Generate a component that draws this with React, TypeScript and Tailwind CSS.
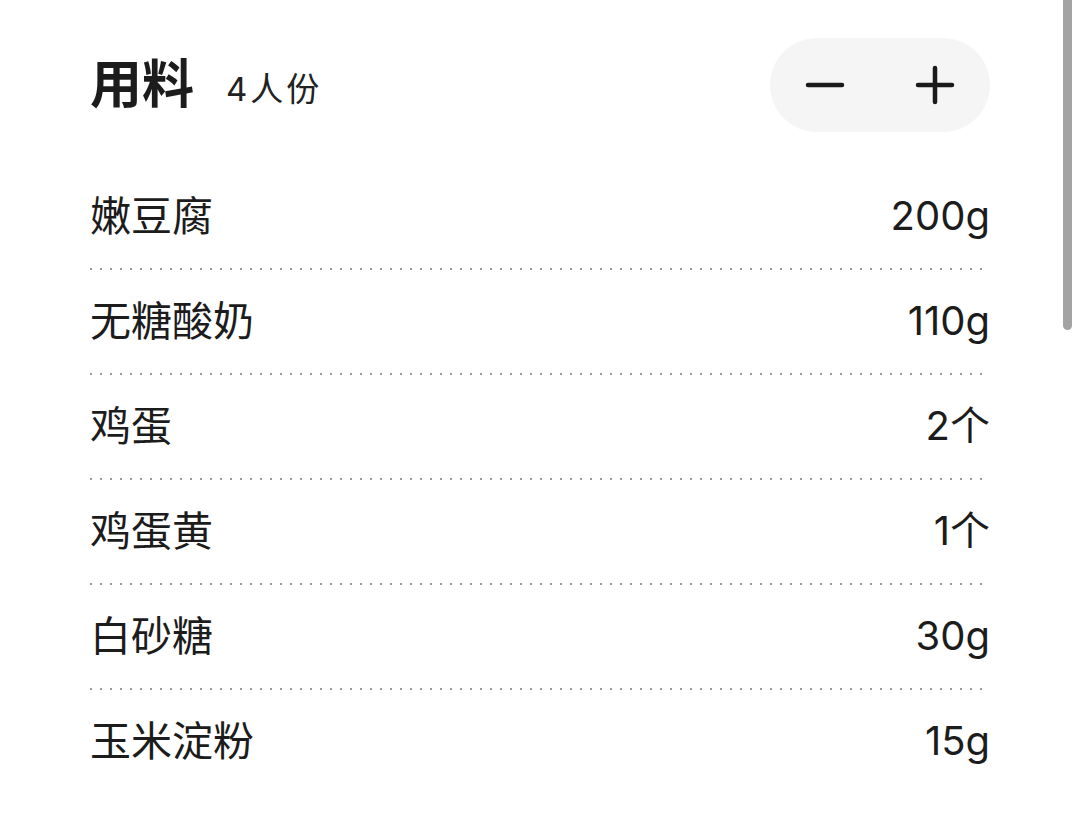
const INGREDIENTS = [
  { name: '嫩豆腐', amount: '200g' },
  { name: '无糖酸奶', amount: '110g' },
  { name: '鸡蛋', amount: '2个' },
  { name: '鸡蛋黄', amount: '1个' },
  { name: '白砂糖', amount: '30g' },
  { name: '玉米淀粉', amount: '15g' },
];

const FONT = "font-['Inter','Noto_Sans_CJK_SC',sans-serif]";

export default function App() {
  return (
    <div className={`relative w-[1080px] h-[816px] overflow-hidden bg-white text-[#1c1c1c] ${FONT}`}>
      <div className="px-[90px] pt-[38px]">
        {/* Header */}
        <div className="flex items-center justify-between h-[94px]">
          <div className="flex items-center gap-[32px]">
            <h2 className="text-[52px] font-bold leading-none">用料</h2>
            <span className="mt-[8px] text-[33px] leading-none tracking-[3px] text-[#222]">4人份</span>
          </div>
          <div className="flex h-[94px] w-[220px] rounded-full bg-[#f5f5f5]">
            <button className="flex w-[110px] items-center justify-center" aria-label="decrease">
              <svg width="40" height="40" viewBox="0 0 40 40" fill="none">
                <path d="M3 20h34" stroke="#1a1a1a" strokeWidth="4.5" strokeLinecap="round" />
              </svg>
            </button>
            <button className="flex w-[110px] items-center justify-center" aria-label="increase">
              <svg width="40" height="40" viewBox="0 0 40 40" fill="none">
                <path d="M3 20h34M20 3v34" stroke="#1a1a1a" strokeWidth="4.5" strokeLinecap="round" />
              </svg>
            </button>
          </div>
        </div>

        {/* Ingredient list */}
        <div className="mt-[33px]">
          {INGREDIENTS.map((item, i) => (
            <div key={item.name}>
              <div className="flex items-center justify-between pt-[22px] pb-[23px] h-[103px]">
                <span className="text-[41px] leading-[58px]">{item.name}</span>
                <span className="text-[40px] leading-[58px]">{item.amount}</span>
              </div>
              {i < INGREDIENTS.length - 1 && (
                <div className="h-[2px] w-[894px] bg-[linear-gradient(to_right,#9a9a9a_2px,transparent_2px)] bg-[length:10px_2px] bg-repeat-x" />
              )}
            </div>
          ))}
        </div>
      </div>

      {/* overlay scrollbar */}
      <div className="absolute right-[8px] top-0 h-[330px] w-[9px] rounded-b-full bg-[#a3a3a3]" />
    </div>
  );
}
